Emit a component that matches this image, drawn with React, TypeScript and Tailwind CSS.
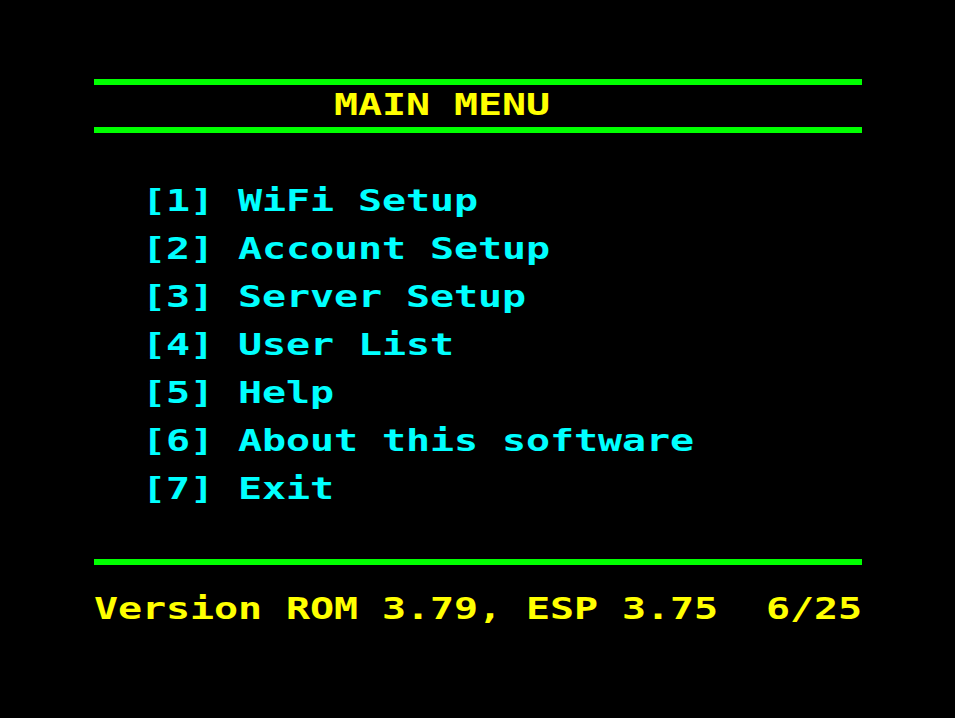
const items = [
  "[1] WiFi Setup",
  "[2] Account Setup",
  "[3] Server Setup",
  "[4] User List",
  "[5] Help",
  "[6] About this software",
  "[7] Exit",
];

// one teletext-ish text row: 24px cells, glyphs squashed to the blocky look
function Row({ text, className }: { text: string; className: string }) {
  return (
    <div className={`flex h-[48px] items-center ${className}`}>
      <span className="inline-block origin-center scale-y-[0.76] whitespace-pre font-['DejaVu_Sans_Mono',monospace] text-[40px] leading-none font-bold tracking-[-0.08px]">
        {text}
      </span>
    </div>
  );
}

export default function App() {
  return (
    <div className="min-h-[718px] w-full bg-black">
      <div className="ml-[94px] w-[768px] pt-[79px]">
        <div className="h-[6px] bg-[#00ff00]" />
        <div className="flex h-[42px] items-center overflow-hidden pb-[5px]">
          <Row text={"          MAIN MENU"} className="text-[#ffff00]" />
        </div>
        <div className="h-[6px] bg-[#00ff00]" />

        <div className="pt-[43px]">
          {items.map((t) => (
            <Row key={t} text={"  " + t} className="text-[#00ffff]" />
          ))}
        </div>

        <div className="mt-[47px] h-[6px] bg-[#00ff00]" />
        <div className="pt-[19px]">
          <Row text="Version ROM 3.79, ESP 3.75  6/25" className="text-[#ffff00]" />
        </div>
      </div>
    </div>
  );
}
